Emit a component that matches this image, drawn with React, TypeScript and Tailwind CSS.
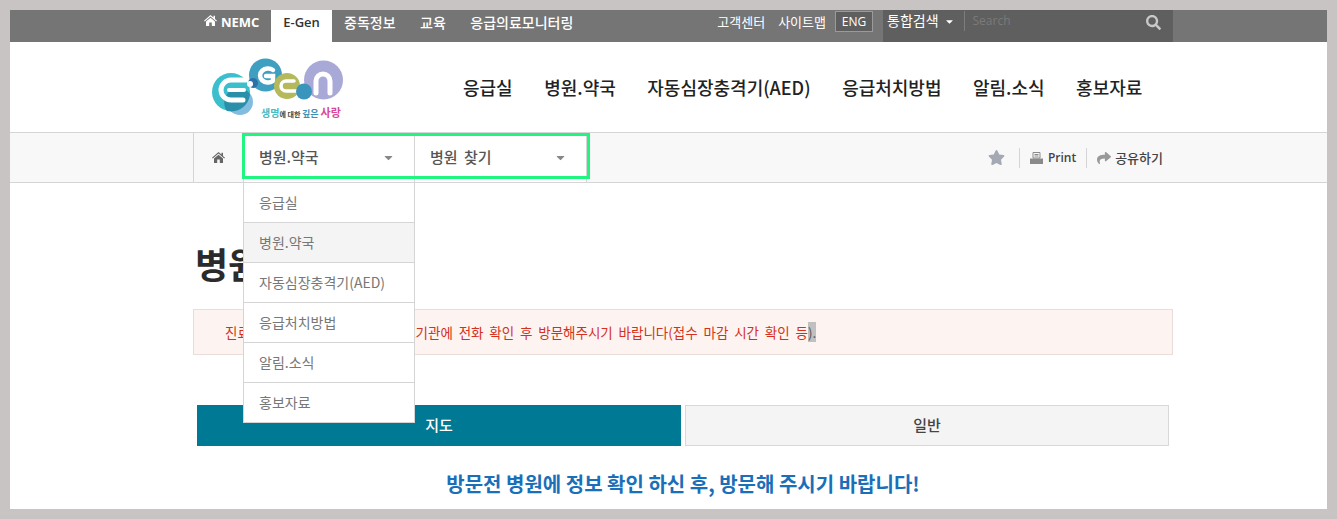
import React from 'react';
import { FaStar, FaShare, FaSearch, FaCaretDown } from 'react-icons/fa';

const topLinks = ['중독정보', '교육', '응급의료모니터링'];
const mainNav = ['응급실', '병원.약국', '자동심장충격기(AED)', '응급처치방법', '알림.소식', '홍보자료'];
const menuItems = ['응급실', '병원.약국', '자동심장충격기(AED)', '응급처치방법', '알림.소식', '홍보자료'];

const HomeIcon = ({ className }: { className?: string }) => (
  <svg width="13" height="11" viewBox="0 0 13 11" fill="currentColor" className={className}>
    <path d="M6.5 0 L9.5 2.6 V0.8 H11 V3.9 L13 5.7 L12.2 6.5 L6.5 1.6 L0.8 6.5 L0 5.7Z" />
    <path d="M2 6.6 L6.5 2.7 L11 6.6 V11 H7.8 V7.6 H5.2 V11 H2Z" />
  </svg>
);

const Logo = () => (
  <svg width="134" height="68" viewBox="0 -2 134 68" className="block">
    {/* coordinates are relative to the logo box */}
    <circle cx="30" cy="46" r="13" fill="#82bcdf" />
    <circle cx="21" cy="36" r="19" fill="#3cbfcc" />
    <path d="M17 55 A19 19 0 0 0 40 38 A13 13 0 0 0 17 55Z" fill="#2a8fa9" />
    <path d="M36 24 H21 a7 7 0 0 0 0 20 H33" fill="none" stroke="#fff" strokeWidth="5" strokeLinecap="round" />
    <path d="M19 34 H34" fill="none" stroke="#fff" strokeWidth="4" strokeLinecap="round" />
    <circle cx="55.5" cy="19" r="16.5" fill="#3e9fc1" />
    <path d="M63 14 a8 7 0 1 0 0 11 V20 H56" fill="none" stroke="#fff" strokeWidth="4.5" strokeLinecap="round" />
    <circle cx="43" cy="27" r="5" fill="#2f70a8" />
    <circle cx="40" cy="28" r="3" fill="#fff" />
    <circle cx="77" cy="30" r="13" fill="#b4b95b" />
    <path d="M88 35 H76 a5 5 0 0 1 0 -10 H84" fill="none" stroke="#fff" strokeWidth="3.5" strokeLinecap="round" />
    <circle cx="113.5" cy="24" r="19.5" fill="#a8a9d6" />
    <circle cx="94" cy="35.5" r="8" fill="#3a95bc" />
    <path d="M106 37 V25 a7 7 0 0 1 14 0 V37" fill="none" stroke="#fff" strokeWidth="5" strokeLinecap="round" />
    <text x="51" y="61" fontSize="10" fontWeight="700" fontFamily="'Noto Sans CJK KR', sans-serif">
      <tspan fill="#46bcc4">생명</tspan>
      <tspan fill="#444" fontSize="7">에 대한 </tspan>
      <tspan fill="#3d8fb4" fontSize="9">깊은 </tspan>
      <tspan fill="#d9479a" fontSize="11">사랑</tspan>
    </text>
  </svg>
);

const PrintIcon = () => (
  <svg width="13" height="12" viewBox="0 0 13 12" className="block">
    <path d="M3 0.5 H10 V6 H3Z" fill="none" stroke="#8a8a8a" />
    <path d="M4.5 2.5 H8.5 M4.5 4 H8.5" stroke="#8a8a8a" />
    <rect x="0" y="6.5" width="13" height="5.5" fill="#8a8a8a" />
  </svg>
);

export default function App() {
  return (
    <div className="h-[519px] overflow-hidden bg-[#c9c4c4] p-[10px] font-['Noto_Sans_CJK_KR','Open_Sans',sans-serif]">
      <div className="relative h-[499px] overflow-hidden bg-white">
        {/* Top bar */}
        <div className="h-[32px] bg-[#757575]">
          <div className="ml-[183px] flex h-[32px] w-[980px] items-start text-[14px] leading-[24px] text-white">
            <a className="ml-[11px] flex w-[67px] items-center gap-[4px] font-['Open_Sans',sans-serif] text-[13px] font-bold">
              <HomeIcon className="mb-[3px]" />
              <span>NEMC</span>
            </a>
            <a className="h-[32px] w-[61px] bg-white text-center font-['Open_Sans',sans-serif] text-[13px] font-semibold text-[#333]">E-Gen</a>
            <div className="ml-[12px] flex gap-[24.5px] font-medium">
              {topLinks.map((t) => (
                <a key={t}>{t}</a>
              ))}
            </div>
            <div className="ml-auto flex h-[32px] items-start text-[13px]">
              <a>고객센터</a>
              <a className="ml-[13px]">사이트맵</a>
              <span className="ml-[9px] mt-[1px] flex h-[21px] w-[38px] items-center justify-center border border-[#9a9a9a] bg-[#5f5f5f] font-['Open_Sans',sans-serif] text-[12px]">ENG</span>
              <div className="ml-[10px] flex h-[32px] w-[290px] items-start bg-[#5f5f5f]">
                <span className="ml-[4px] text-[14px] leading-[21px]">통합검색</span>
                <FaCaretDown className="ml-[5px] mt-[6px] text-[11px]" />
                <span className="ml-[9px] mt-[1px] h-[20px] w-px bg-[#7d7d7d]" />
                <span className="ml-[8px] mt-[1px] font-['Open_Sans',sans-serif] text-[12px] leading-[20px] text-[#7a7a7a]">Search</span>
                <FaSearch className="ml-auto mr-[12px] mt-[5px] text-[15px] text-[#c8c8c8]" />
              </div>
            </div>
          </div>
        </div>

        {/* Logo and main navigation */}
        <div className="h-[90px]">
          <div className="ml-[183px] flex h-[90px] w-[980px] items-center">
            <div className="ml-[17px] mt-[2px]">
              <Logo />
            </div>
            <nav className="ml-[119px] flex gap-[31.5px] text-[18px] font-medium text-[#222]">
              {mainNav.map((t) => (
                <a key={t}>{t}</a>
              ))}
            </nav>
          </div>
        </div>

        {/* Breadcrumb bar */}
        <div className="h-[51px] border-y border-[#d5d5d5] bg-[#f8f8f8]">
          <div className="ml-[183px] flex h-[49px] w-[980px] items-center border-l border-[#d5d5d5]">
            <div className="flex h-full w-[49px] items-center justify-center">
              <HomeIcon className="text-[#666]" />
            </div>
            <div className="relative flex h-full w-[172px] items-center justify-between border-x border-[#d5d5d5] bg-white pl-[15px] pr-[19px] text-[15px] font-medium text-[#555]">
              <span>병원.약국</span>
              <FaCaretDown className="text-[13px] text-[#888]" />
              {/* Open dropdown */}
              <ul className="absolute left-[-1px] top-[50px] z-10 w-[172px] border border-[#d5d5d5] border-t-0 bg-white text-[14px] font-normal text-[#777]">
                {menuItems.map((t, i) => (
                  <li
                    key={t}
                    className={`flex items-center pl-[15px] ${i > 0 ? 'h-[40px] border-t border-[#d5d5d5]' : 'h-[39px]'} ${i === 1 ? 'bg-[#f4f4f4]' : ''}`}
                  >
                    {t}
                  </li>
                ))}
              </ul>
            </div>
            <div className="flex h-full w-[172px] items-center justify-between border-r border-[#d5d5d5] bg-white pl-[15px] pr-[19px] text-[15px] font-medium text-[#555]">
              <span className="[word-spacing:3px]">병원 찾기</span>
              <FaCaretDown className="text-[13px] text-[#888]" />
            </div>
            <div className="ml-auto mr-[10px] flex items-center text-[13px] font-medium text-[#444]">
              <FaStar className="text-[17px] text-[#a4a9b4]" />
              <span className="ml-[14px] h-[20px] w-px bg-[#d5d5d5]" />
              <span className="ml-[10px]"><PrintIcon /></span>
              <span className="ml-[5px] font-['Open_Sans',sans-serif] text-[12px] font-semibold">Print</span>
              <span className="ml-[10px] h-[20px] w-px bg-[#d5d5d5]" />
              <FaShare className="ml-[10px] text-[14px] text-[#999]" />
              <span className="ml-[4px]">공유하기</span>
            </div>
          </div>
        </div>

        {/* Highlight drawn over the selects */}
        <div className="absolute left-[232px] top-[123px] h-[46px] w-[348px] border-[3px] border-[#1ff57f]" />

        {/* Content */}
        <div className="ml-[183px] w-[980px]">
          <h1 className="ml-[2px] mt-[56px] text-[36px] font-bold leading-[48px] text-[#2b2b2b]">병원 찾기</h1>
          <div className="mt-[22px] flex h-[46px] items-center border border-[#eaddd9] bg-[#fdf4f1] pl-[31px] text-[13.5px] text-[#d4301c] [word-spacing:2.8px]">
            <span>진료 시간 변경될 수 있으니 의료기관에 전화 확인 후 방문해주시기 바랍니다(접수 마감 시간 확인 등</span>
            <span className="bg-[#c0c0c0] text-[#555]">).</span>
          </div>
          <div className="ml-[4px] mt-[50px] flex gap-[4px] text-[15px] font-medium">
            <a className="flex h-[41px] w-[484px] items-center justify-center bg-[#007a94] text-white">지도</a>
            <a className="flex h-[41px] w-[484px] items-center justify-center border border-[#d8d8d8] bg-[#f4f4f4] text-[#444]">일반</a>
          </div>
          <p className="mt-[25px] text-center text-[20px] font-bold leading-[26px] text-[#1a6fb8]">방문전 병원에 정보 확인 하신 후, 방문해 주시기 바랍니다!</p>
        </div>
      </div>
    </div>
  );
}
